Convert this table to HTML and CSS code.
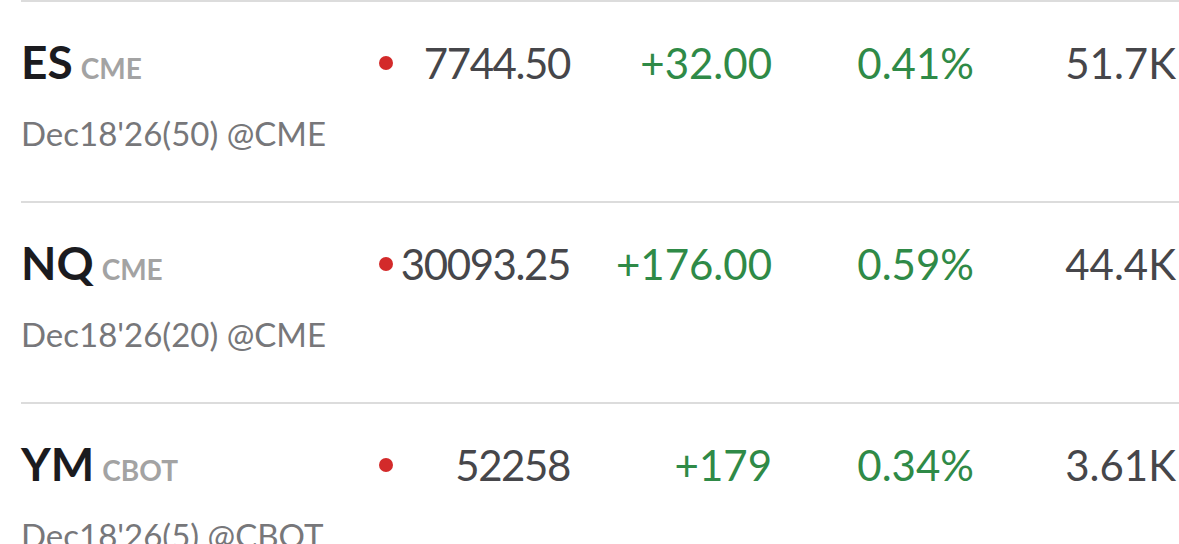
FILE: index.html
```html
<!DOCTYPE html>
<html lang="en">
<head>
  <meta charset="UTF-8">
  <meta name="viewport" content="width=device-width, initial-scale=1.0">
  <title>Futures</title>
  <link rel="stylesheet" href="styles.css">
</head>
<body>

  <ul class="quotes">
    <li class="quote">
      <div class="main">
        <div class="name">
          <span class="symbol">ES</span>
          <span class="exchange">CME</span>
        </div>
        <div class="col price"><span class="dot"></span><span>7744.50</span></div>
        <div class="col change up">+32.00</div>
        <div class="col pct up">0.41%</div>
        <div class="col vol">51.7K</div>
      </div>
      <div class="contract">Dec18'26(50) @CME</div>
    </li>
    <li class="quote">
      <div class="main">
        <div class="name">
          <span class="symbol">NQ</span>
          <span class="exchange">CME</span>
        </div>
        <div class="col price"><span class="dot"></span><span>30093.25</span></div>
        <div class="col change up">+176.00</div>
        <div class="col pct up">0.59%</div>
        <div class="col vol">44.4K</div>
      </div>
      <div class="contract">Dec18'26(20) @CME</div>
    </li>
    <li class="quote">
      <div class="main">
        <div class="name">
          <span class="symbol">YM</span>
          <span class="exchange">CBOT</span>
        </div>
        <div class="col price"><span class="dot"></span><span>52258</span></div>
        <div class="col change up">+179</div>
        <div class="col pct up">0.34%</div>
        <div class="col vol">3.61K</div>
      </div>
      <div class="contract">Dec18'26(5) @CBOT</div>
    </li>
  </ul>

</body>
</html>
```

FILE: styles.css
```css
* {
  margin: 0;
  padding: 0;
  box-sizing: border-box;
}

body {
  background: #fff;
  font-family: Lato, "Noto Sans", sans-serif;
  overflow: hidden;
}

.quotes {
  list-style: none;
  padding-left: 21px;
}

.quote {
  height: 201px;
  border-top: 2px solid #dcdcdc;
  padding-top: 29px;
}

.quote .main {
  display: flex;
  align-items: baseline;
  height: 62px;
  line-height: 62px;
  padding-right: 3px;
}

.quote .name {
  flex: 1;
  display: flex;
  align-items: baseline;
  gap: 8px;
}

.quote .symbol {
  font-size: 46px;
  font-weight: 700;
  color: #1b1b1f;
}

.quote .exchange {
  font-size: 28px;
  font-weight: 700;
  color: #a3a3a3;
}

.quote .col {
  width: 202px;
  text-align: right;
  font-size: 42px;
  color: #46464a;
}

.quote .price {
  display: flex;
  align-items: baseline;
  justify-content: space-between;
  gap: 7px;
  padding-left: 11px;
  letter-spacing: -1.4px;
}

.quote .dot {
  align-self: center;
  flex-shrink: 0;
  width: 14px;
  height: 14px;
  border-radius: 50%;
  background: #d32a2a;
}

.quote .up {
  color: #2f8a47;
}

.quote .contract {
  margin-top: 20px;
  font-size: 33px;
  line-height: 40px;
  color: #77777a;
}
```
